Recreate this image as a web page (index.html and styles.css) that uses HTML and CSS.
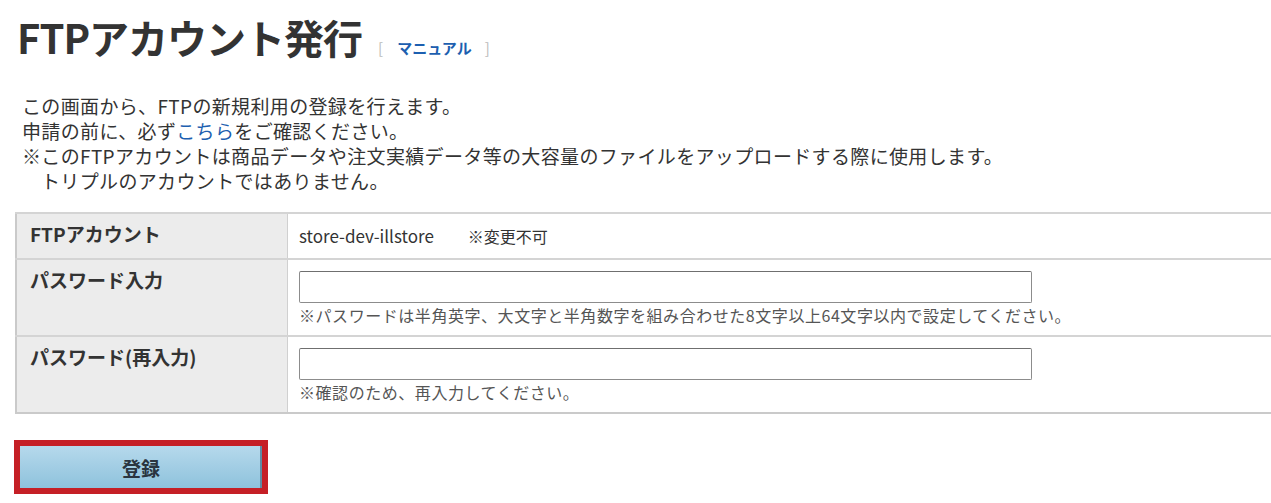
FILE: index.html
```html
<!DOCTYPE html>
<html lang="ja">
<head>
    <meta charset="UTF-8">
    <meta name="viewport" content="width=device-width, initial-scale=1.0">
    <title>FTPアカウント発行</title>

    <link rel="stylesheet" href="styles.css">
</head>
<body>
    <div class="page-head">
        <h1> FTPアカウント発行 </h1>
        <span class="manual"><span class="br">[</span><a href="#">マニュアル</a><span class="br">]</span></span>
    </div>

    <div class="lead">
        <p>この画面から、FTPの新規利用の登録を行えます。</p>
        <p>申請の前に、必ず<a href="#">こちら</a>をご確認ください。</p>
        <p>※このFTPアカウントは商品データや注文実績データ等の大容量のファイルをアップロードする際に使用します。</p>
        <p class="indent">トリプルのアカウントではありません。</p>
    </div>

    <table class="form-table">
        <tr class="row-account">
            <th>FTPアカウント</th>
            <td>store-dev-illstore<span class="fixed">※変更不可</span></td>
        </tr>
        <tr>
            <th>パスワード入力</th>
            <td>
                <input type="password" class="field">
                <p class="note">※パスワードは半角英字、大文字と半角数字を組み合わせた8文字以上64文字以内で設定してください。</p>
            </td>
        </tr>
        <tr>
            <th>パスワード(再入力)</th>
            <td>
                <input type="password" class="field">
                <p class="note">※確認のため、再入力してください。</p>
            </td>
        </tr>
    </table>

    <div class="actions">
        <button type="button" class="btn-submit">登録</button>
    </div>
</body>
</html>
```

FILE: styles.css
```css
body {
    margin: 0;
    padding: 0 0 0 15px;
    font-family: "Noto Sans CJK JP", "Noto Sans", sans-serif;
    color: #333;
    background: #fff;
}
a {
    color: #1d5fb0;
    text-decoration: none;
}
.page-head {
    display: flex;
    align-items: baseline;
    padding: 13px 0 0 2px;
    height: 70px;
    box-sizing: border-box;
}
.page-head h1 {
    margin: 0;
    font-size: 40px;
    line-height: 48px;
    font-weight: bold;
    color: #333;
    letter-spacing: -1px;
}
.manual {
    margin-left: 16px;
    font-size: 15px;
    font-weight: bold;
}
.manual .br {
    color: #bbb;
    font-weight: normal;
}
.manual a {
    padding: 0 13px 0 14px;
}
.lead {
    padding: 23px 0 0 7px;
    font-size: 19px;
    line-height: 25px;
}
.lead p {
    margin: 0;
    letter-spacing: 0.35px;
}
.lead .indent {
    padding-left: 19px;
}
.form-table {
    margin-top: 19px;
    width: 100%;
    border-collapse: collapse;
    border: 2px solid #cacaca;
    border-right: 0;
    font-size: 17px;
}
.form-table th {
    width: 245px;
    background: #ececec;
    text-align: left;
    vertical-align: top;
    font-size: 19px;
    padding: 8px 12px 10px 13px;
    border-top: 2px solid #d4d4d4;
    border-right: 1px solid #d0d0d0;
    line-height: 24px;
}
.form-table td {
    padding: 11px 10px 10px 11px;
    border-top: 2px solid #d4d4d4;
    vertical-align: top;
    line-height: 20px;
}
.form-table .row-account td {
    padding-top: 12px;
    padding-bottom: 12px;
}
.fixed {
    margin-left: 34px;
    font-size: 16px;
}
.field {
    display: block;
    width: 733px;
    height: 32px;
    box-sizing: border-box;
    margin: 0;
    border: 1px solid #8c8c8c;
    border-top-color: #6f6f6f;
    border-radius: 2px;
    background: #fff;
}
.note {
    margin: 2px 0 0;
    color: #555;
    font-size: 16px;
    line-height: 20px;
    letter-spacing: 0.55px;
}
.actions {
    padding: 26px 0 0;
}
.btn-submit {
    display: block;
    width: 254px;
    height: 54px;
    margin-left: -1px;
    border: 6px solid #c51f26;
    background: linear-gradient(#b6d9ec, #8ec2dc);
    box-shadow: inset -2px 0 0 #5e8aa3;
    font-family: "Noto Sans CJK JP", sans-serif;
    font-size: 19px;
    font-weight: bold;
    color: #2a3540;
    padding: 0;
}
```
